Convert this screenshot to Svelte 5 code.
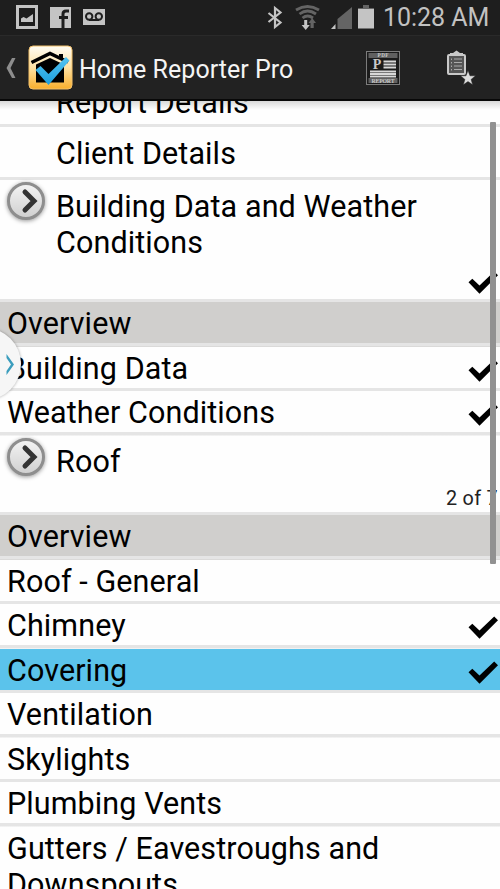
<script lang="ts">
	interface Row {
		label: string;
		kind: 'group' | 'heading' | 'item';
		expandable?: boolean;
		done?: boolean;
		selected?: boolean;
		count?: string;
		tall?: boolean;
	}

	const rows: Row[] = [
		{ label: 'Report Details', kind: 'group' },
		{ label: 'Client Details', kind: 'group' },
		{
			label: 'Building Data and Weather Conditions',
			kind: 'group',
			expandable: true,
			done: true,
			tall: true
		},
		{ label: 'Overview', kind: 'heading' },
		{ label: 'Building Data', kind: 'item', done: true },
		{ label: 'Weather Conditions', kind: 'item', done: true },
		{ label: 'Roof', kind: 'group', expandable: true, count: '2 of 7' },
		{ label: 'Overview', kind: 'heading' },
		{ label: 'Roof - General', kind: 'item' },
		{ label: 'Chimney', kind: 'item', done: true },
		{ label: 'Covering', kind: 'item', done: true, selected: true },
		{ label: 'Ventilation', kind: 'item' },
		{ label: 'Skylights', kind: 'item' },
		{ label: 'Plumbing Vents', kind: 'item' },
		{ label: 'Gutters / Eavestroughs and Downspouts', kind: 'item', tall: true }
	];
</script>

<div class="screen">
	<div class="status-bar">
		<div class="notifications">
			<svg width="22" height="24" viewBox="0 0 22 24" aria-hidden="true">
				<path fill="#c4c4c4" fill-rule="evenodd" d="M0 0h22v24H0zM3 3v18h16V3z" />
				<path fill="#c4c4c4" d="M5 17v-3.500l2.500-1.500 3 1.500 6.500-4.500v8z" />
			</svg>
			<svg width="21" height="21" viewBox="0 0 21 21" aria-hidden="true">
				<path fill="#c4c4c4" d="M0 0h21v21H0z" />
				<path fill="none" stroke="#1e1e1e" stroke-width="3" d="M13 21V7q0-3 3-3h3M9 10.500h9" />
			</svg>
			<svg width="22" height="16" viewBox="0 0 22 16" aria-hidden="true">
				<path fill="#c4c4c4" d="M0 0h22v16H0z" />
				<g fill="none" stroke="#1e1e1e" stroke-width="2">
					<circle cx="6.200" cy="7.500" r="3.200" />
					<circle cx="15.800" cy="7.500" r="3.200" />
					<path d="M6 11h10" />
				</g>
			</svg>
		</div>
		<svg class="system" width="108" height="26" viewBox="0 0 108 26" aria-hidden="true">
			<path
				fill="none"
				stroke="#c4c4c4"
				stroke-width="2.200"
				d="M1.500 9l12 9.500L8 23V4l5.500 4.500L1.500 18"
			/>
			<path
				fill="none"
				stroke="#646464"
				stroke-width="2.800"
				d="M29 6q11.500-7 23 0M32.500 10q8-6 16.500 0M35.500 14q5-4 10.500 0"
			/>
			<path fill="#c4c4c4" d="M37.200 16h3v5h2.600l-4.100 5-4.100-5h2.600z" />
			<path fill="#646464" d="M43.500 24v-5h-2l3.700-5 3.800 5h-2.300v5z" />
			<path fill="#646464" d="M70.500 25V15L85 3v22z" />
			<path fill="#c4c4c4" d="M64 25l4.500-5v5z" />
			<path fill="#646464" d="M96 1h6v3h5v3H91V4h5z" />
			<path fill="#c4c4c4" d="M91 5h16v19.500H91z" />
		</svg>
		<time>10:28 AM</time>
	</div>

	<header>
		<svg class="back" width="10" height="22" viewBox="0 0 10 22" aria-hidden="true">
			<path fill="#8d8d8d" d="M6 1h3.500L4.500 11l5 10H6L.500 11z" />
		</svg>
		<svg class="logo" width="45" height="45" viewBox="0 0 45 45" aria-hidden="true">
			<defs>
				<linearGradient id="gold" x1="0" y1="0" x2="0" y2="1">
					<stop offset="0" stop-color="#fffdf5" />
					<stop offset="0.500" stop-color="#fee2a4" />
					<stop offset="1" stop-color="#f8ae2b" />
				</linearGradient>
				<linearGradient id="tick" x1="0" y1="0" x2="0" y2="1">
					<stop offset="0" stop-color="#55c4f2" />
					<stop offset="1" stop-color="#1b9edb" />
				</linearGradient>
			</defs>
			<rect x="1" y="1" width="43" height="43" rx="4" fill="url(#gold)" stroke="#f3c16b" />
			<path d="M8 19.500L22 13l14 6.500v18H8z" />
			<path fill="none" stroke="#000" stroke-width="3.500" d="M3.500 17.500L22 8.500l18 8.500" />
			<path d="M31 9h4v6l-4-2z" />
			<path fill="url(#tick)" d="M7.500 25l5-4 8 8L38 12l3.500 3.500L20.500 40z" />
		</svg>
		<h1>Home Reporter Pro</h1>
		<svg class="pdf" width="34" height="34" viewBox="0 0 34 34" aria-hidden="true">
			<rect x="0.500" y="0.500" width="33" height="33" fill="#1b1b1b" stroke="#7c7c7c" />
			<path fill="#606060" d="M2.500 2h29v5h-29zM2.500 27h29v5h-29z" />
			<text x="17" y="6.300" font-size="5.200" textLength="11">PDF</text>
			<text x="11" y="18" font-size="14">P</text>
			<text x="17" y="31.700" font-size="5.800" textLength="23">REPORT</text>
			<path
				stroke="#d8d8d8"
				stroke-width="2.200"
				d="M17.500 10.500H30M17.500 13.500H30M17.500 16.500H30M4 20.500h26M4 23h26M4 25.500h26"
			/>
		</svg>
		<svg class="clipboard" width="30" height="36" viewBox="0 0 30 36" aria-hidden="true">
			<rect x="2" y="5" width="17" height="19" rx="1" fill="#555" stroke="#c9c9c9" stroke-width="2" />
			<path fill="#c9c9c9" d="M4 5V3h3l3.500-2.500L14 3h3v2z" />
			<path stroke="#aaa" stroke-width="1.200" d="M8 9h8M8 12.500h8M8 16h8M8 19.500h8" />
			<path stroke="#aaa" stroke-dasharray="1.500 2" d="M5.500 8.500v12" />
			<path
				fill="#ddd"
				stroke="#222"
				stroke-width="0.500"
				d="M22 20.500l2 5.300h5.500l-4.400 3.600 1.600 5.400-4.700-3.200-4.700 3.200 1.600-5.400-4.400-3.600H20z"
			/>
		</svg>
	</header>

	<main>
		<ul>
			{#each rows as row}
				<li class={[row.kind, row.expandable && 'expandable', row.selected && 'selected', row.tall && 'tall']}>
					{#if row.expandable}
						<svg class="arrow" width="44" height="44" viewBox="0 0 44 44" aria-hidden="true">
							<defs>
								<linearGradient id="knob" x1="0" y1="0" x2="0" y2="1">
									<stop offset="0" stop-color="#f4f4f4" />
									<stop offset="1" stop-color="#cfcfcf" />
								</linearGradient>
							</defs>
							<circle cx="22" cy="21" r="17.500" fill="url(#knob)" stroke="#8e8e8e" stroke-width="3" />
							<path
								fill="none"
								stroke="#343434"
								stroke-width="5"
								stroke-linecap="round"
								d="M21 12l9 9-9 9"
							/>
						</svg>
					{/if}
					<span class="label">{row.label}</span>
					{#if row.done}
						<svg class="check" width="30" height="24" viewBox="0 0 30 24" aria-hidden="true">
							<path d="M.500 11.300L4.300 7.700l7.200 6.800L26.200.500 30 4.200 11.500 22.700z" />
						</svg>
					{/if}
					{#if row.count}
						<span class="count">{row.count}</span>
					{/if}
				</li>
			{/each}
		</ul>
		<div class="scrollbar"></div>
		<div class="edge-handle">
			<svg width="8" height="21" viewBox="0 0 8 21" aria-hidden="true">
				<path fill="#3b9dbd" d="M.500 0L8 10.500.500 21v-4l4.500-6.500-4.500-6.500z" />
			</svg>
		</div>
	</main>
</div>

<style>
	:global(body) {
		margin: 0;
	}

	.screen {
		display: flex;
		flex-direction: column;
		width: 500px;
		height: 889px;
		overflow: hidden;
		font-family: Roboto, 'Liberation Sans', sans-serif;
		color: #000;
		background: #fefefe;
	}

	svg {
		flex: none;
	}

	.status-bar {
		display: flex;
		flex: none;
		align-items: center;
		box-sizing: border-box;
		height: 35px;
		padding: 0 12px 1px 16px;
		background: #1e1e1e;
	}

	.notifications {
		display: flex;
		align-items: center;
		gap: 12px;
	}

	.system {
		margin-left: auto;
		margin-right: 8px;
	}

	time {
		width: 105px;
		font-size: 25px;
		line-height: 35px;
		letter-spacing: -0.05px;
		white-space: nowrap;
		color: #c2c2c2;
	}

	header {
		display: flex;
		flex: none;
		align-items: center;
		box-sizing: border-box;
		height: 66px;
		padding-left: 6px;
		border-top: 1px solid #2a2a2a;
		border-bottom: 2px solid #080808;
		background: #222;
	}

	.logo {
		margin: 0 6px 0 12px;
	}

	h1 {
		flex: 1;
		margin: 0;
		padding-top: 3px;
		font-size: 25px;
		font-weight: 400;
		letter-spacing: 0.03px;
		white-space: nowrap;
		color: #f4f4f4;
	}

	.pdf {
		margin-right: 46px;
	}

	.pdf text {
		font-family: 'Liberation Serif', serif;
		font-weight: 700;
		text-anchor: middle;
		fill: #c8c8c8;
	}

	.clipboard {
		margin-right: 24px;
	}

	main {
		position: relative;
		flex: 1;
		min-height: 0;
		overflow: hidden;
	}

	main::before {
		content: '';
		position: absolute;
		inset: 0 0 auto;
		height: 9px;
		background: linear-gradient(rgb(0 0 0 / 0.15), rgb(0 0 0 / 0));
	}

	ul {
		margin: -26.5px 0 0;
		padding: 0;
		list-style: none;
	}

	li {
		display: flex;
		box-sizing: border-box;
		height: 44.5px;
		padding: 4px 2px 0 7px;
		font-size: 30.5px;
		line-height: 36.5px;
		letter-spacing: 0.1px;
		background: linear-gradient(#e5e5e5, #e5e5e5) bottom / 100% 3.5px no-repeat;
	}

	.label {
		flex: 1;
	}

	.heading {
		background-color: #d0cfcd;
	}

	.selected {
		background-color: #5bc3eb;
	}

	.group {
		flex-wrap: wrap;
		align-content: flex-start;
		height: 52.8px;
		padding: 8.5px 2px 0 56px;
	}

	.group:first-child {
		padding-top: 10px;
	}

	.expandable {
		height: 79.5px;
		padding-left: 4px;
	}

	.expandable .label {
		flex: 0 0 430px;
	}

	.group.tall {
		height: 122.3px;
	}

	.item.tall {
		height: 82px;
		padding-right: 80px;
	}

	.arrow {
		margin: -8.5px 8px 0 0;
		filter: drop-shadow(0 1px 2px rgb(0 0 0 / 0.4));
	}

	.check {
		align-self: flex-start;
		margin: 8px 0 0 auto;
	}

	.group .check {
		margin-top: 9px;
	}

	.count {
		margin: 1.5px 0 0 auto;
		font-size: 19.8px;
		line-height: 34px;
		letter-spacing: 0.3px;
		color: #222;
	}

	.scrollbar {
		position: absolute;
		top: 21px;
		left: 490px;
		width: 6px;
		height: 442px;
		border-radius: 1px;
		background: #919191;
	}

	.edge-handle {
		position: absolute;
		top: 227px;
		left: -51px;
		display: flex;
		align-items: center;
		justify-content: flex-end;
		box-sizing: border-box;
		width: 72px;
		height: 72px;
		padding-right: 7px;
		border-radius: 50%;
		background: #f6f6f6;
		box-shadow: 0 0 3px rgb(0 0 0 / 0.35);
	}
</style>
